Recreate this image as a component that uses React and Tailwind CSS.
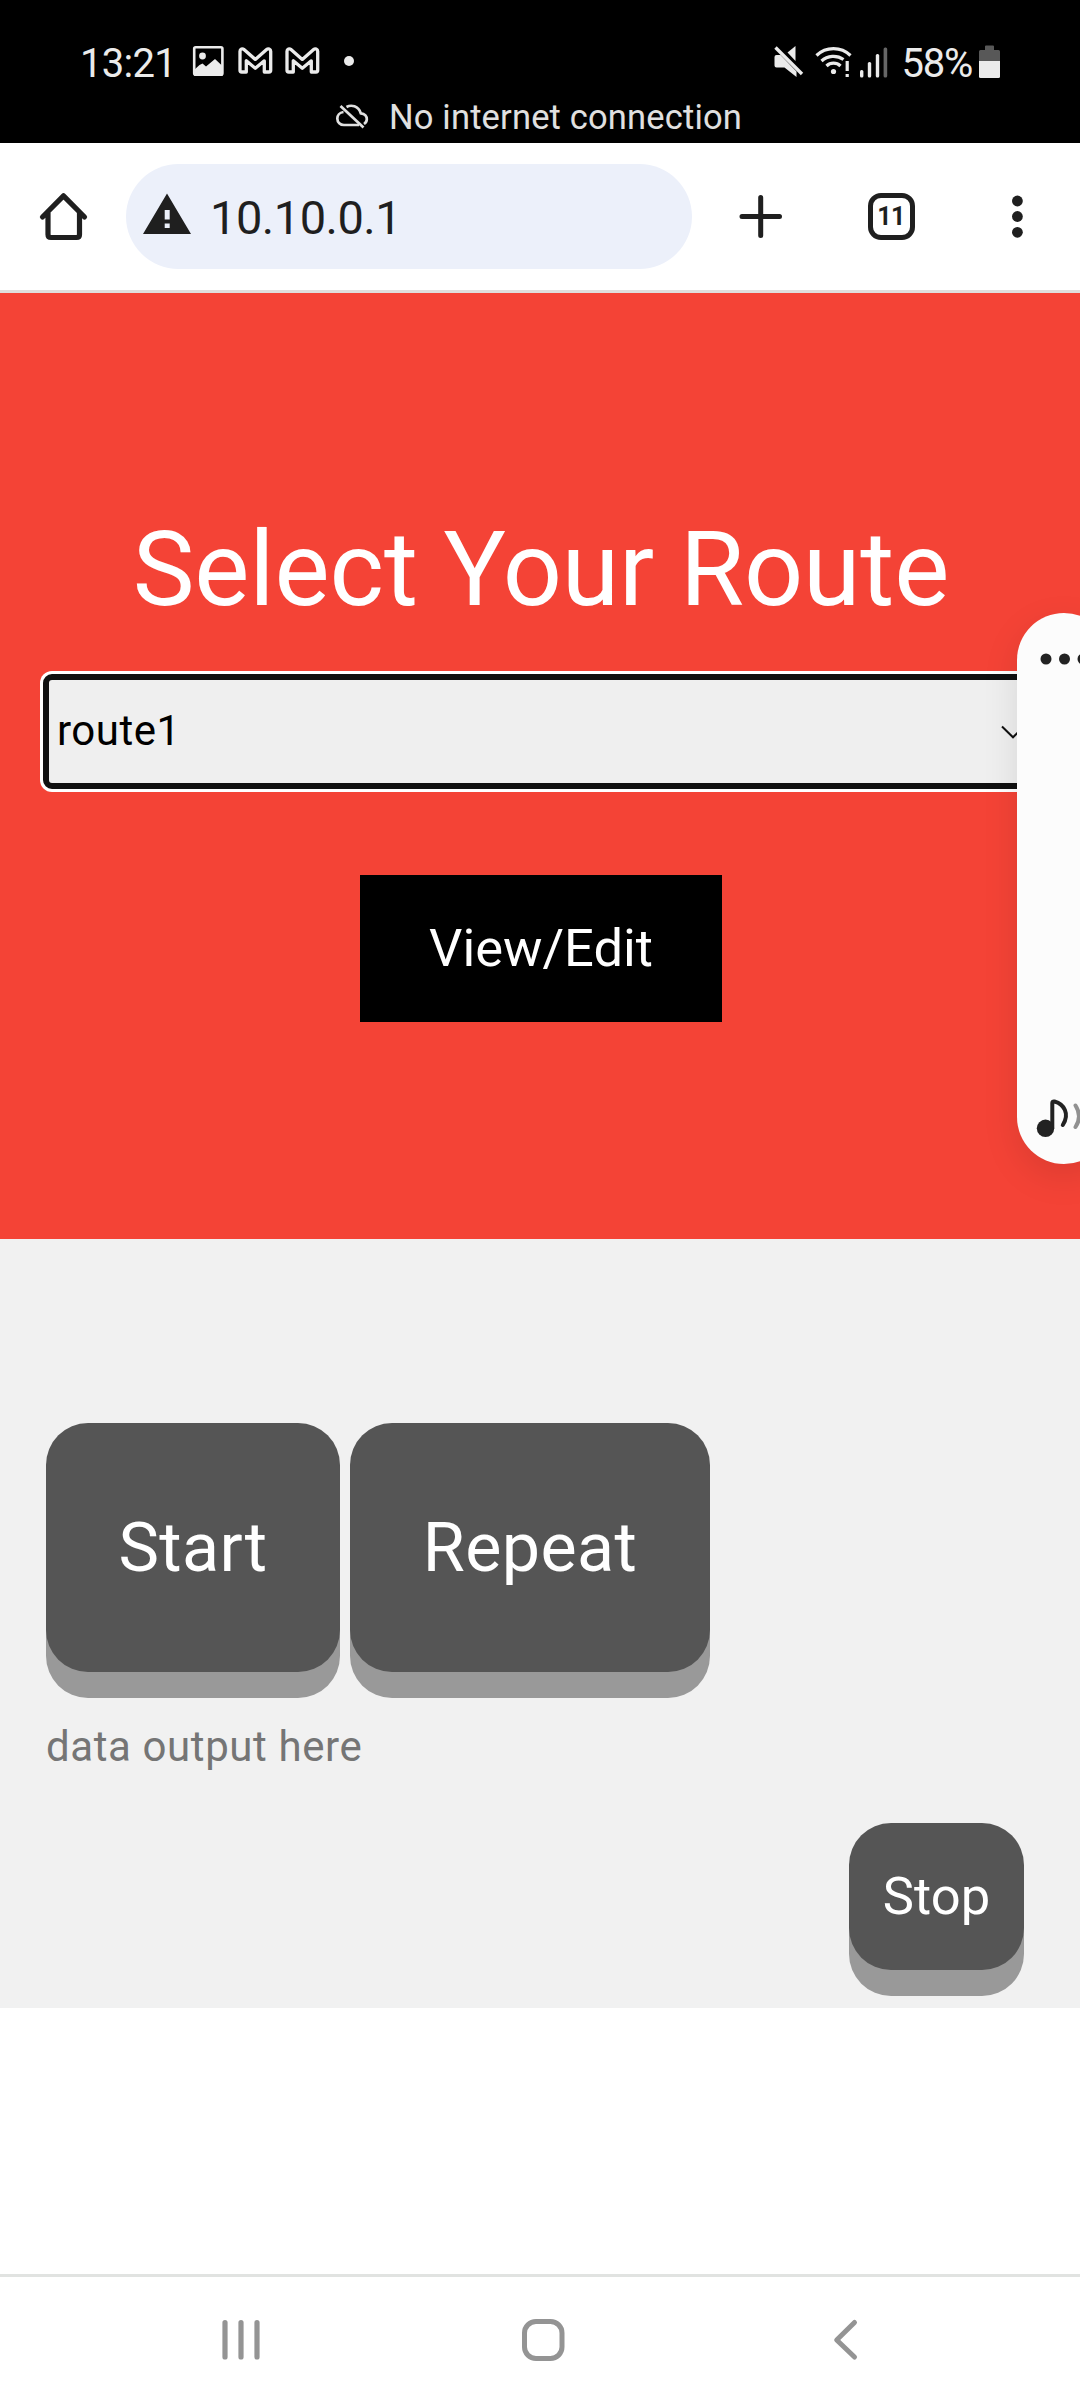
import React from "react";

// Each icon's viewBox is in screen pixels, so one unit is one device pixel.
function Icon({ box, className = "", children }) {
  const [, , w, h] = box.split(" ");
  return (
    <svg viewBox={box} width={w} height={h} className={"block shrink-0 " + className} fill="none" aria-hidden="true">
      {children}
    </svg>
  );
}

function MailGlyph({ box, x }) {
  return (
    <Icon box={box}>
      <path
        transform={`translate(${x} 47)`}
        d="M2 23.300V4.300C2 2 4.400 1.200 6 2.600L17.300 12.400L28.600 2.600C30.200 1.200 32.700 2 32.700 4.300V23.300Q32.700 25 31 25H26.300V13.800L17.300 21.200L8.300 13.800V25H3.700Q2 25 2 23.300Z"
        stroke="#ebebeb"
        strokeWidth="3.3"
        strokeLinejoin="round"
      />
    </Icon>
  );
}

function StatusBar() {
  return (
    <header className="flex h-[143px] flex-col bg-black text-[#ebebeb]">
      <div className="mt-10 flex h-10 items-start">
        <span className="ml-[80px] w-[109px] shrink-0 text-[40px] leading-[47px] tracking-[-0.700px] whitespace-nowrap">13:21</span>
        <Icon box="189 40 46 40">
          <rect x="194.200" y="47.200" width="28.200" height="27.600" rx="1.500" stroke="#ebebeb" strokeWidth="2.6" />
          <circle cx="202.500" cy="56" r="3.4" fill="#ebebeb" />
          <path d="M194 70L199.500 65L202.500 63.500L206 66.500L215 59L223 66.500V75.500H194Z" fill="#ebebeb" />
        </Icon>
        <MailGlyph box="235 40 47 40" x={238} />
        <MailGlyph box="282 40 47 40" x={285} />
        <Icon box="329 40 40 40">
          <circle cx="349" cy="61" r="5" fill="#ebebeb" />
        </Icon>
        <div className="flex-1" />
        <Icon box="770 40 40 40">
          <path d="M774.500 57Q774.500 55 776.500 55H780.500L796.500 71.500V77L784.500 67.500H776.500Q774.500 67.500 774.500 65.500Z" fill="#ebebeb" />
          <path d="M795.500 46V61L787.500 52.500Z" fill="#ebebeb" />
          <path d="M775.500 47.500L802 74" stroke="#ebebeb" strokeWidth="3.4" />
        </Icon>
        <Icon box="810 40 46 40">
          <g stroke="#ebebeb" strokeWidth="3.2">
            <path d="M816.500 55.500A24.500 24.500 0 0 1 850.500 55.500" />
            <path d="M821.500 61A17.500 17.500 0 0 1 843.500 59.500" />
            <path d="M826.500 66A10 10 0 0 1 840.500 66" />
            <path d="M847.200 61V71M847.200 74V77" />
          </g>
          <circle cx="833.500" cy="71.500" r="2.6" fill="#ebebeb" />
        </Icon>
        <Icon box="856 40 44 40">
          <g fill="#ebebeb">
            <rect x="860" y="70" width="3.400" height="7.500" rx="1.500" />
            <rect x="867.800" y="62" width="3.400" height="15.500" rx="1.500" />
            <rect x="875.800" y="54" width="3.400" height="23.500" rx="1.500" />
            <rect x="883.600" y="47.500" width="3.600" height="30" rx="1.500" fill="#666" />
          </g>
        </Icon>
        <span className="w-[76px] shrink-0 pl-[1.500px] text-[40px] leading-[47px] tracking-[-1.200px] whitespace-nowrap">58%</span>
        <Icon box="976 40 104 40">
          <path d="M985 50V46.500Q985 45.500 986 45.500H993Q994 45.500 994 46.500V50H998.500Q1000 50 1000 51.500V61H979V51.500Q979 50 980.500 50Z" fill="#585858" />
          <path d="M979 61H1000V76.500Q1000 78 998.500 78H980.500Q979 78 979 76.500Z" fill="#ebebeb" />
        </Icon>
      </div>
      <div className="flex h-[63px] items-start pl-[332px]">
        <Icon box="332 98 57 36" className="mt-[18px]">
          <g stroke="#e0e0e0" strokeWidth="2.7">
            <path d="M340.500 106L363.500 127.500" />
            <path d="M343.500 112C339.500 112.500 337.300 115.500 337.300 118.500C337.300 122.300 340.300 125 344 125H359" />
            <path d="M346.500 107C351 104.500 358.500 105.500 360.800 113.300C365 113.500 367 116.500 366.800 119.300C366.700 121.300 365.800 122.800 364 124" />
          </g>
        </Icon>
        <span className="mt-[13px] text-[34.500px] leading-[48px] tracking-[0.170px] whitespace-nowrap text-[#e0e0e0]">No internet connection</span>
      </div>
    </header>
  );
}

function BrowserBar() {
  return (
    <nav className="flex h-[150px] items-start border-b-[3px] border-[#e0dedc] bg-white pt-[21px] text-[#1f1f1f]">
      <Icon box="0 164 126 105">
        <path
          d="M42.500 217L63.500 195.800L84.500 217M48 213V234.500Q48 237.500 51 237.500H76.500Q79.500 237.500 79.500 234.500V213"
          stroke="#1f1f1f"
          strokeWidth="5.200"
          strokeLinecap="round"
          strokeLinejoin="round"
        />
      </Icon>
      <div className="flex h-[105px] w-[566px] items-center rounded-full bg-[#ecf0fa]">
        <Icon box="126 164 84 105">
          <path fillRule="evenodd" d="M167 193.500L191 234H143ZM164.700 210V219.500H169.700V210ZM164.700 223.500V228H169.700V223.500Z" fill="#1f1f1f" />
        </Icon>
        <span className="pt-[2px] text-[47px] leading-[105px] tracking-[-0.500px]">10.10.0.1</span>
      </div>
      <Icon box="692 164 138 105">
        <path d="M760.700 197.500V235.500M742 216.500H779.500" stroke="#1f1f1f" strokeWidth="5" strokeLinecap="round" />
      </Icon>
      <div className="mt-[29px] ml-[38px] flex h-[47px] w-[47px] items-center justify-center rounded-[13px] border-[5px] border-[#1f1f1f] pr-px text-[25px] leading-none font-bold tracking-[-0.500px]">
        11
      </div>
      <Icon box="915 164 165 105">
        <g fill="#1f1f1f">
          <circle cx="1017.400" cy="201" r="5.400" />
          <circle cx="1017.400" cy="216.500" r="5.400" />
          <circle cx="1017.400" cy="232.300" r="5.400" />
        </g>
      </Icon>
    </nav>
  );
}

function VolumePanel() {
  return (
    <div className="absolute top-[320px] left-[1017px] h-[551px] w-[94px] rounded-[47px] bg-[#fcfcfc] shadow-[0_12px_36px_rgba(0,0,0,0.1)]">
      <Icon box="1017 613 94 551">
        <g fill="#222">
          <circle cx="1046" cy="659" r="5.500" />
          <circle cx="1064.500" cy="659" r="5.500" />
          <circle cx="1083" cy="659" r="5.500" />
          <circle cx="1045.500" cy="1128.300" r="8.700" />
        </g>
        <path d="M1052.300 1128V1103Q1052.300 1101 1054.500 1101.500C1064 1104 1070 1114 1062.800 1125" stroke="#222" strokeWidth="4" strokeLinecap="round" />
        <path d="M1075.500 1105.500Q1082.500 1116.500 1075.500 1127" stroke="#919191" strokeWidth="4" strokeLinecap="round" />
      </Icon>
    </div>
  );
}

function RouteSection() {
  return (
    <section className="relative flex h-[946px] flex-col items-center bg-[#f44336]">
      <h1 className="mt-[215px] ml-[2px] text-[104px] leading-[124px] tracking-[-0.100px] whitespace-nowrap text-white">Select Your Route</h1>
      <div className="mt-[39px] h-[121px] w-[1000px] rounded-[12px] bg-white p-[3px]">
        <div className="flex h-full items-center justify-between rounded-[9px] border-[6px] border-[#101010] bg-[#efefef] pr-[5px] pl-2 text-[42px] text-black">
          <span className="pb-[2px] tracking-[0.500px]">route1</span>
          <Icon box="1000 720 26 24">
            <path d="M1002 726.500L1013 737.300L1024 726.500" stroke="#101010" strokeWidth="2" />
          </Icon>
        </div>
      </div>
      <button className="mt-[83px] ml-[2px] h-[147px] w-[362px] bg-black text-[52.500px] text-white">View/Edit</button>
      <VolumePanel />
    </section>
  );
}

function ControlSection() {
  return (
    <section className="flex h-[769px] flex-col bg-[#f1f1f1] px-[46px] pt-[184px] text-white">
      <div className="flex gap-[10px]">
        <button className="h-[249px] w-[294px] rounded-[42px] bg-[#555] pt-px text-[68.250px] tracking-[0.400px] shadow-[0_26px_0_#999]">Start</button>
        <button className="h-[249px] w-[360px] rounded-[42px] bg-[#555] pt-px text-[68.250px] tracking-[0.400px] shadow-[0_26px_0_#999]">Repeat</button>
      </div>
      <p className="mt-[45px] text-[42px] leading-[60px] tracking-[0.600px] text-[#757575]">data output here</p>
      <button className="mt-[46px] mr-[10px] h-[147px] w-[175px] self-end rounded-[42px] bg-[#555] text-[52.500px] shadow-[0_26px_0_#999]">Stop</button>
    </section>
  );
}

function SystemNav() {
  return (
    <footer className="flex h-[126px] items-center justify-between border-t-[3px] border-[#e1e3e1] bg-white px-[220px] pt-[3px]">
      <Icon box="220 2316 42 48">
        <path d="M225 2322.500V2357M241 2322.500V2357M257 2322.500V2357" stroke="#949494" strokeWidth="5.200" strokeLinecap="round" />
      </Icon>
      <Icon box="520 2316 48 48" className="ml-[8px]">
        <rect x="524.500" y="2321.500" width="37.500" height="37" rx="11.500" stroke="#949494" strokeWidth="5" />
      </Icon>
      <Icon box="818 2316 42 48">
        <path d="M854.500 2322.500L836.700 2340L854.500 2357" stroke="#949494" strokeWidth="5" strokeLinecap="round" strokeLinejoin="round" />
      </Icon>
    </footer>
  );
}

export default function App() {
  return (
    <div className="flex h-[2400px] w-[1080px] flex-col overflow-hidden bg-white font-['Roboto',sans-serif]">
      <StatusBar />
      <BrowserBar />
      <RouteSection />
      <ControlSection />
      <div className="flex-1" />
      <SystemNav />
    </div>
  );
}
